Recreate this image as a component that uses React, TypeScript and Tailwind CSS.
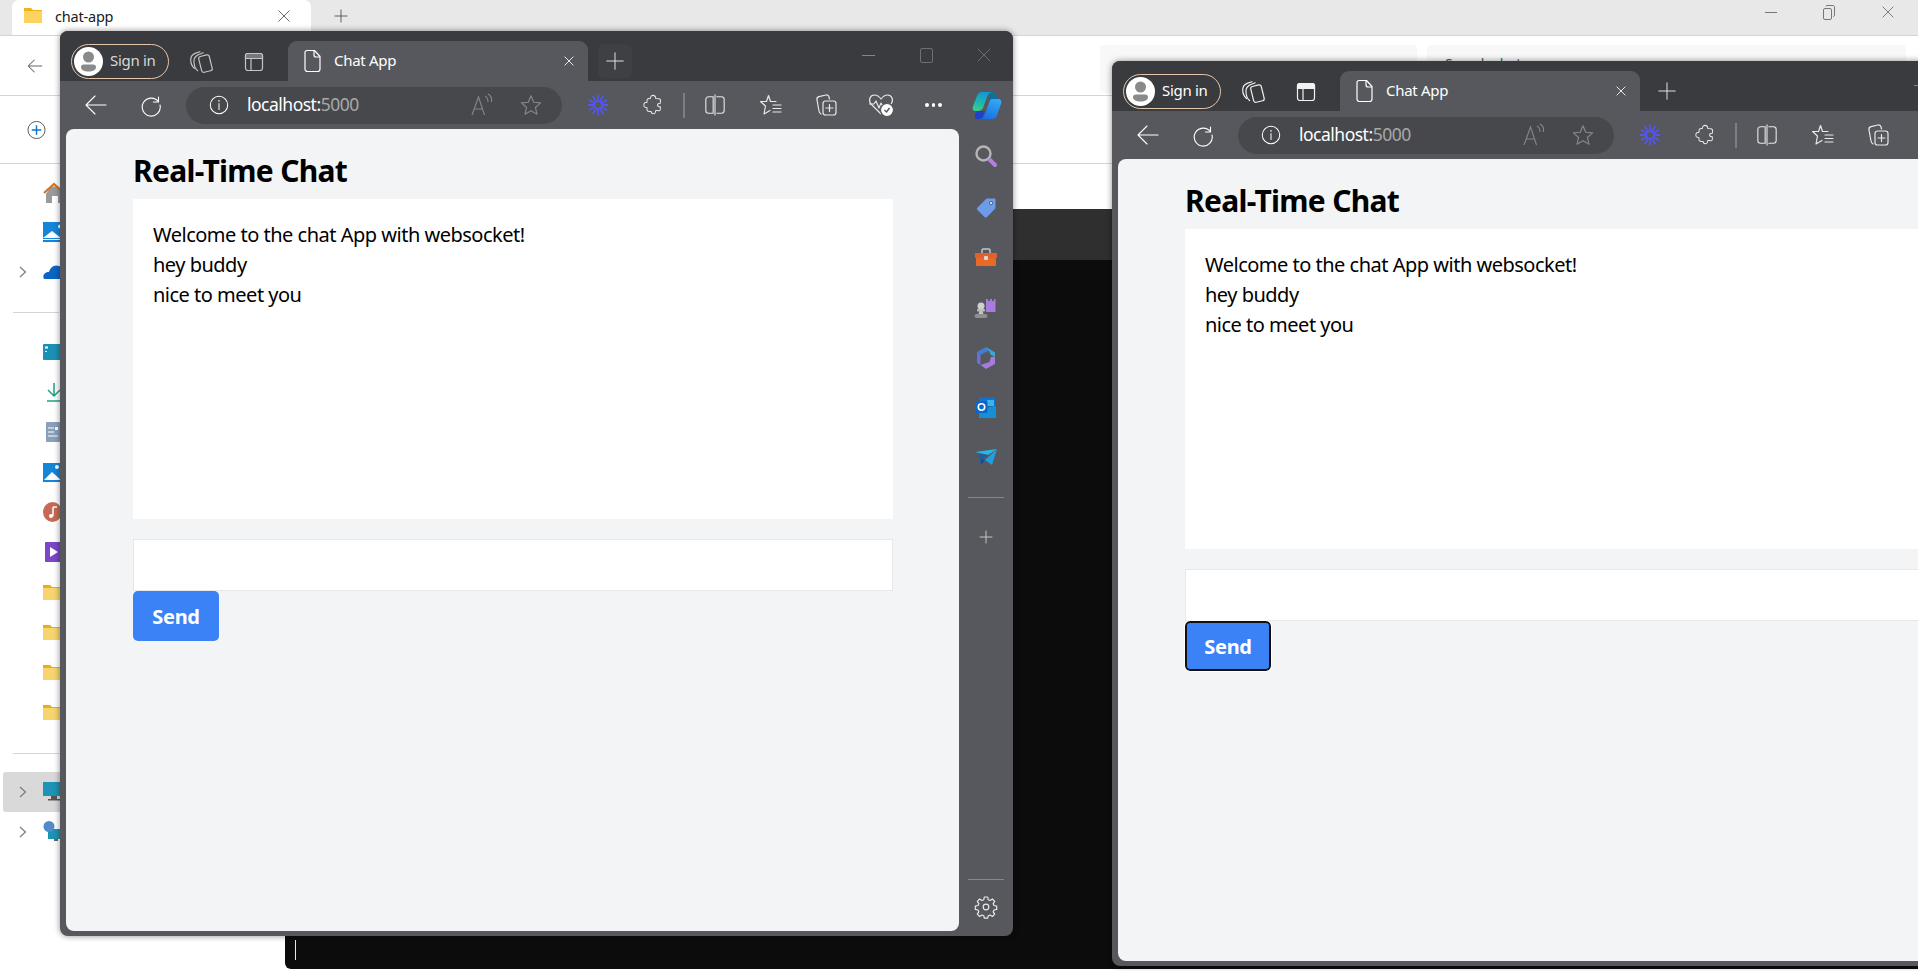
import React from "react";

const sans = "font-['Noto_Sans','Open_Sans',sans-serif]";

const S = ({ size = 24, children, className = "", vb = "0 0 24 24", sw = 1.5, color = "#fff" }: { size?: number; children: React.ReactNode; className?: string; vb?: string; sw?: number; color?: string }) => (
  <svg width={size} height={size} viewBox={vb} fill="none" stroke={color} strokeWidth={sw} strokeLinecap="round" strokeLinejoin="round" className={className}>
    {children}
  </svg>
);

const Spark = () => (
  <S size={22} color="#5356f0" sw={2}>
    <circle cx="12" cy="12" r="4.2" />
    {[0, 30, 60, 90, 120, 150, 180, 210, 240, 270, 300, 330].map((a) => (
      <line key={a} x1="12" y1="1.5" x2="12" y2="7" transform={`rotate(${a} 12 12)`} />
    ))}
  </S>
);

const Copilot = ({ id }: { id: string }) => (
  <svg width="30" height="29" viewBox="0 0 30 29">
    <defs>
      <linearGradient id={`${id}a`} x1="0.6" y1="0" x2="0.3" y2="1">
        <stop offset="0" stopColor="#1197d8" />
        <stop offset="0.55" stopColor="#1bb5b0" />
        <stop offset="1" stopColor="#37d08a" />
      </linearGradient>
      <linearGradient id={`${id}b`} x1="0.7" y1="0" x2="0.3" y2="1">
        <stop offset="0" stopColor="#35a8f2" />
        <stop offset="1" stopColor="#1670e6" />
      </linearGradient>
    </defs>
    <path d="M20 1c3 0 5 3 6 8h-9l1-8z" fill="#0d6f9e" />
    <path d="M10 1h11c-3 0-5 2-6 5l-4 11c-1 2-3 3-5 3H4c-3 0-4-2-3-5L5 5c1-3 3-4 5-4z" fill={`url(#${id}a)`} />
    <path d="M5 28c-1.500 0-2.500-1.500-2-3.500L4 20h9l-3 8z" fill="#2041c8" />
    <path d="M20 8h6c3 0 4 2 3 5l-4 11c-1 3-3 4-6 4H7c3 0 5-2 6-5l4-11c.5-2 1.500-4 3-4z" fill={`url(#${id}b)`} />
  </svg>
);

function Cell({ children, className = "" }: { children: React.ReactNode; className?: string }) {
  return <div className={`flex items-center justify-center shrink-0 ${className}`}>{children}</div>;
}

function SidebarIcons() {
  return (
    <div className="w-[54px] shrink-0 h-full flex flex-col items-center pt-[2px]">
      <Cell className="h-[50px] mb-[2px]">
        <svg width="24" height="24" viewBox="0 0 24 24" fill="none">
          <circle cx="9.500" cy="9.500" r="7" stroke="#b5b5b5" strokeWidth="2.400" />
          <path d="M16 16l5 5" stroke="#b37fe0" strokeWidth="4" strokeLinecap="round" />
        </svg>
      </Cell>
      <Cell className="h-[50px]">
        <svg width="22" height="22" viewBox="0 0 22 22">
          <path d="M12 1.500h7c1 0 1.500.5 1.500 1.500v7c0 1-.3 1.500-1 2.200l-7.500 7.800c-.8.8-1.700.8-2.500 0l-7-7c-.8-.8-.8-1.700 0-2.500L10 3c.7-.8 1.200-1.500 2-1.500z" fill="#6d9be8" />
          <circle cx="16" cy="6" r="1.600" fill="#e5eaf5" stroke="#33507f" strokeWidth="0.800" />
        </svg>
      </Cell>
      <Cell className="h-[50px]">
        <svg width="24" height="24" viewBox="0 0 24 24">
          <path d="M8 7V4.500C8 3.800 8.500 3 9.500 3h5c1 0 1.500.8 1.500 1.500V7" fill="none" stroke="#c8c8c8" strokeWidth="1.500" />
          <rect x="1" y="7" width="22" height="5" fill="#e3602a" />
          <rect x="2" y="12" width="20" height="8" rx="1" fill="#ea6a25" />
          <rect x="10" y="10" width="4" height="4" rx="1" fill="#d8d8d8" />
        </svg>
      </Cell>
      <Cell className="h-[50px]">
        <svg width="24" height="24" viewBox="0 0 24 24">
          <path d="M13.500 16V3h2v2h2V3h2v2h2V3h1.500v13z" fill="#a77be0" transform="translate(-1.500 0)" />
          <circle cx="7" cy="10" r="3.500" fill="#d0d0d0" />
          <rect x="3" y="13" width="8" height="2.500" rx="1" fill="#bdbdbd" />
          <path d="M5.500 15h3l1 3h-5z" fill="#c4c4c4" />
          <rect x="0.500" y="18" width="13" height="4" rx="2" fill="#8f8f8f" />
        </svg>
      </Cell>
      <Cell className="h-[50px]">
        <svg width="22" height="24" viewBox="0 0 22 24">
          <path d="M11 1 2 6v4l5-2 7-3.500z" fill="#3f7fd8" />
          <path d="M11 1l9 5.500V11l-4-2-2-4z" fill="#39a7d8" />
          <path d="M2 6v11l3.500 2V9z" fill="#6a6fdc" />
          <path d="M20 11v7l-9 5-5.500-4 9-3 1.500-5z" fill="#a67be0" />
          <path d="M7 8.500l7 3.500-7 4z" fill="#57585d" />
        </svg>
      </Cell>
      <Cell className="h-[50px]">
        <svg width="22" height="22" viewBox="0 0 22 22">
          <rect x="4" y="0.500" width="16" height="9" fill="#1173cc" />
          <path d="M21 9v12H4V12z" fill="#1590d8" />
          <rect x="12" y="3" width="7" height="6" fill="#38b4ec" />
          <rect x="0.500" y="4" width="12" height="12" rx="1" fill="#0a66c8" />
          <circle cx="6.500" cy="10" r="3.200" fill="none" stroke="#fff" strokeWidth="1.600" />
        </svg>
      </Cell>
      <Cell className="h-[50px]">
        <svg width="24" height="20" viewBox="0 0 24 20">
          <path d="M1 4l22-3-9 6z" fill="#27b7ec" />
          <path d="M23 1 18 17l-7-5z" fill="#1e9fe5" />
          <path d="M5 6l9 1-7 4-1 6z" fill="#1160b8" />
          <path d="M7 11v6l4-5z" fill="#0c4f9c" />
        </svg>
      </Cell>
      <div className="w-[36px] h-px bg-[#85868a] mt-[14px]" />
      <Cell className="h-[50px] mt-[14px]">
        <S size={18} color="#d0d0d0" sw={1.200}>
          <path d="M12 4v16M4 12h16" />
        </S>
      </Cell>
      <div className="flex-1" />
      <div className="w-[36px] h-px bg-[#85868a]" />
      <Cell className="h-[56px] pb-[2px]">
        <S size={24} color="#e8e8e8" sw={1.200}>
          <path d="M10.300 2.500h3.400l.5 2.700 1.900.8 2.300-1.500 2.300 2.400-1.500 2.300.8 1.800 2.700.6v3.300l-2.700.6-.8 1.800 1.500 2.300-2.300 2.400-2.300-1.500-1.900.8-.5 2.400h-3.400l-.5-2.400-1.900-.8-2.300 1.500-2.300-2.400 1.500-2.300-.8-1.800-2.700-.6v-3.300l2.700-.6.800-1.800-1.500-2.300 2.300-2.400 2.300 1.500 1.900-.8z" transform="translate(0 -0.500)" />
          <circle cx="12" cy="12" r="2.800" />
        </S>
      </Cell>
    </div>
  );
}

function Browser({ focused, id, className }: { focused?: boolean; id: string; className: string }) {
  const strip = focused ? "#f2f2f2" : "#c5c5c5";
  return (
    <div className={`absolute w-[953px] h-[905px] rounded-[8px] overflow-hidden flex flex-col bg-[#57585d] shadow-[0_0_6px_rgba(0,0,0,0.45)] ${sans} ${className}`}>
      <div className="h-[50px] shrink-0 bg-[#3a3b3f] flex items-end pl-[11px]">
        <div className="w-[98px] h-[35px] mb-[2px] rounded-full border border-[#e6c6ad] flex items-center pl-[2px] gap-[7px]">
          <div className="w-[29px] h-[29px] rounded-full bg-white flex items-center justify-center overflow-hidden shrink-0">
            <svg width="21" height="23" viewBox="0 0 21 23">
              <circle cx="10.500" cy="7" r="5.500" fill="#8a8a8a" />
              <path d="M6 14.500h9c2 0 3 1 3 2.500 0 3-3 4.500-7.500 4.500S3 20 3 17c0-1.500 1-2.500 3-2.500z" fill="#8a8a8a" />
            </svg>
          </div>
          <span className={`text-[15px] leading-none -mt-[2px] tracking-[-0.3px] whitespace-nowrap ${focused ? "text-white" : "text-[#d8d8d8]"}`}>Sign in</span>
        </div>
        <Cell className="w-[26px] h-[26px] ml-[19px] mb-[6px]">
          <S size={26} color={strip} sw={1.100}>
            <rect x="11" y="6" width="10" height="15" rx="2" transform="rotate(-14 16 13)" />
            <path d="M9 20c-2-1.500-3.500-5-3.500-9 0-2 1-4 3.500-5.500L14 3.500" />
            <path d="M6 18C3.500 16 2.500 13 2.500 10 2.500 7.500 4 5 6.500 4L11 2.500" />
          </S>
        </Cell>
        <Cell className="w-[22px] h-[22px] ml-[29px] mb-[8px]">
          <svg width="20" height="20" viewBox="0 0 20 20" fill="none" stroke={strip} strokeWidth="1.200">
            <rect x="1.500" y="1.500" width="17" height="17" rx="2.500" />
            <path d="M1.500 6.500h17v-3a2 2 0 0 0-2-2h-13a2 2 0 0 0-2 2z" fill={focused ? "#f2f2f2" : "#77787b"} />
            <path d="M7 6.500v12" />
          </svg>
        </Cell>
        <div className="w-[300px] h-[40px] ml-[23px] bg-[#57585d] rounded-t-[9px] flex items-center pl-[16px] pr-[12px]">
          <svg width="18" height="24" viewBox="0 0 18 24" fill="none" stroke="#fff" strokeWidth="1.200" strokeLinejoin="round">
            <path d="M3 1.500h7.500L16 7.500V20a2.500 2.500 0 0 1-2.500 2.500h-10A2.500 2.500 0 0 1 1 20V3.500a2 2 0 0 1 2-2z" />
            <path d="M10 1.500V6a2 2 0 0 0 2 2h4" />
          </svg>
          <span className="text-[15px] leading-none -mt-[2px] text-white ml-[12px] tracking-[-0.3px] whitespace-nowrap">Chat App</span>
          <div className="flex-1" />
          <S size={14} sw={1.500}>
            <path d="M5 5l14 14M19 5L5 19" />
          </S>
        </div>
        <Cell className={`w-[34px] h-[34px] ml-[10px] mb-[3px] rounded-[6px] ${focused ? "" : "bg-[#3f4044]"}`}>
          <S size={22} color="#e0e0e0" sw={1.100}>
            <path d="M12 3v18M3 12h18" />
          </S>
        </Cell>
        <div className="flex-1" />
        <div className="flex items-center self-start h-[48px]">
          <Cell className="w-[58px]">
            <div className="w-[13px] h-px bg-[#85868a]" />
          </Cell>
          <Cell className="w-[58px]">
            <div className="w-[13px] h-[15px] rounded-[2px] border border-[#6f7074]" />
          </Cell>
          <Cell className="w-[58px]">
            <S size={18} color="#85868a" sw={0.900}>
              <path d="M4 4l16 16M20 4L4 20" />
            </S>
          </Cell>
        </div>
      </div>
      <div className="h-[48px] shrink-0 bg-[#57585d] flex items-center">
        <Cell className="w-[24px] ml-[24px]">
          <S size={24} sw={1.100}>
            <path d="M22 12H2M11 3l-9 9 9 9" />
          </S>
        </Cell>
        <Cell className="w-[24px] ml-[31px]">
          <S size={24} sw={1.100}>
            <path d="M19.500 4v5h-5" />
            <path d="M19.300 8.500A9 9 0 1 0 21 12" />
          </S>
        </Cell>
        <div className="w-[376px] h-[37px] ml-[23px] rounded-full bg-[#47484c] flex items-center pl-[22px] pr-[20px]">
          <S size={22} sw={1.100}>
            <circle cx="12" cy="12" r="9.500" />
            <path d="M12 10.500V17" />
            <circle cx="12" cy="7.500" r="0.300" />
          </S>
          <span className="ml-[17px] text-[17.500px] leading-none tracking-[-0.5px] whitespace-nowrap">
            <span className="text-white">localhost:</span>
            <span className="text-[#a8a8a8]">5000</span>
          </span>
          <div className="flex-1" />
          <span className="-mr-[1px]">
            <svg width="24" height="24" viewBox="0 0 24 24" fill="none" stroke="#85868a" strokeWidth="1.100">
              <path d="M2 22 8.500 4l6 18M4.500 16h8" />
              <path d="M15 3c2 1 3 3 3 6M18 1c3 1.500 4 5 3.500 8" />
            </svg>
          </span>
          <span className="ml-[27px]">
            <svg width="22" height="22" viewBox="0 0 24 24" fill="none" stroke="#85868a" strokeWidth="1.300" strokeLinejoin="round">
              <path d="M12 2l3 7 7.500.7-5.700 5 1.700 7.300L12 18.200 5.500 22l1.700-7.300-5.700-5L9 9z" />
            </svg>
          </span>
        </div>
        <Cell className="w-[24px] ml-[24px]">
          <Spark />
        </Cell>
        <Cell className="w-[24px] ml-[31px]">
          <S size={22} color="#e8e8e8" sw={1.100}>
            <path d="M9 5c0-2 1.500-3.500 3-3.500S15 3 15 5c2 0 4.500 0 5 1 .5 1.500 0 3 0 4-1.500 0-3 .5-3 2s1.500 2 3 2c0 1.500.5 3-.5 4-1 .5-3 0-4.500 0 0 1.500-1 3.500-2.500 3.500S10 20 10 19c-1 0-3 .5-4-.5s-.5-2.500-.5-3.500C4 15 2 14 2 12s2-3 3.500-3C5.500 8 5 6.500 6 5.500S8 5 9 5z" />
          </S>
        </Cell>
        <div className="w-[1.500px] h-[25px] bg-[#7d7e82] ml-[18px]" />
        <Cell className="w-[24px] ml-[18px]">
          <S size={22} color="#e8e8e8" sw={1.200}>
            <path d="M10 3H5a3 3 0 0 0-3 3v12a3 3 0 0 0 3 3h5zM14 3h5a3 3 0 0 1 3 3v12a3 3 0 0 1-3 3h-5M12 1v22" />
          </S>
        </Cell>
        <Cell className="w-[24px] ml-[32px]">
          <S size={24} color="#e8e8e8" sw={1.200}>
            <path d="M17 8.500h-5.500L9.500 2.500 7.500 8.500H1.500l5 4.500L5 21l6-3.500" />
            <path d="M14 12h8M14 15.500h8M14 19h8" />
          </S>
        </Cell>
        <Cell className="w-[24px] ml-[31px]">
          <S size={24} color="#e8e8e8" sw={1.200}>
            <path d="M7 21c-1-.5-1.700-1.500-2-3L3 7c-.3-1.500.7-3 2-3.300L12 2c1.500-.3 2.700.5 3 2l.5 2" />
            <rect x="9" y="8" width="13" height="14" rx="2.500" />
            <path d="M15.500 11.500v7M12 15h7" />
          </S>
        </Cell>
        <Cell className="w-[28px] ml-[29px]">
          <svg width="28" height="26" viewBox="0 0 28 26" fill="none" stroke="#e8e8e8" strokeWidth="1.200" strokeLinejoin="round">
            <path d="M14 22 4 12C1 8 3 3 7.500 3 10.500 3 12.500 5 14 7c1.500-2 3.500-4 6.500-4C25 3 27 8 24 12" />
            <path d="M2 12h5l2-3 3 7 2-5 1 2h3" />
            <circle cx="20" cy="18" r="6.500" fill="#fff" stroke="#57585d" />
            <path d="M17.500 18l2 2 3-4" stroke="#57585d" strokeWidth="1.400" />
          </svg>
        </Cell>
        <Cell className="w-[24px] ml-[27px] gap-[3px]">
          <div className="w-[3.500px] h-[3.500px] rounded-full bg-white shrink-0" />
          <div className="w-[3.500px] h-[3.500px] rounded-full bg-white shrink-0" />
          <div className="w-[3.500px] h-[3.500px] rounded-full bg-white shrink-0" />
        </Cell>
        <Cell className="w-[32px] ml-[25px]">
          <Copilot id={id} />
        </Cell>
      </div>
      <div className="flex-1 min-h-0 flex pl-[6px]">
        <div className="flex-1 min-w-0 mb-[5px] bg-[#f3f4f6] rounded-[8px] text-black">
          <div className="w-[760px] ml-[67px] pt-[19px]">
            <h1 className="text-[30px] leading-[45px] font-bold tracking-[-0.7px] mb-[6px]">Real-Time Chat</h1>
            <div className="bg-white h-[320px] px-[20px] pt-[21px] text-[20px] leading-[30px] tracking-[-0.5px]">
              <div>Welcome to the chat App with websocket!</div>
              <div>hey buddy</div>
              <div>nice to meet you</div>
            </div>
            <div className="mt-[20px] h-[52px] bg-white border border-[#e5e7eb]" />
            <button
              className={`block w-[86px] h-[50px] pt-[2px] bg-[#3b82f6] rounded-[5px] text-white text-[20px] font-bold tracking-[-0.3px] ${focused ? "border-[2px] border-[#111] outline outline-1 outline-white" : ""}`}
            >
              Send
            </button>
          </div>
        </div>
        <SidebarIcons />
      </div>
    </div>
  );
}

const Folder = () => (
  <svg width="22" height="15" viewBox="0 0 22 15">
    <path d="M0 0h7l2 2h13v13H0z" fill="#e9ac1c" />
    <rect x="0" y="3" width="22" height="12" fill="#f6d56f" />
  </svg>
);

function NavRow({ icon, chev, sel }: { icon: React.ReactNode; chev?: boolean; sel?: boolean }) {
  return (
    <div className={`h-[40px] flex items-center rounded-[3px] ml-[3px] pl-[16px] w-[60px] ${sel ? "bg-[#d9d9d9]" : ""}`}>
      <div className="w-[8px] shrink-0 flex items-center">
        {chev && (
          <svg width="8" height="12" viewBox="0 0 8 12" fill="none" stroke="#7b7b7b" strokeWidth="1.200">
            <path d="M1 1l5.500 5L1 11" />
          </svg>
        )}
      </div>
      <div className="ml-[16px] w-[22px] shrink-0 flex items-center">{icon}</div>
    </div>
  );
}

function Explorer() {
  return (
    <div className={`w-[1918px] h-[971px] bg-white flex flex-col ${sans}`}>
      <div className="h-[36px] shrink-0 bg-[#e8e8e8] border-b border-[#d5d5d5] flex items-stretch text-[#1a1a1a]">
        <div className="ml-[12px] w-[299px] h-[35px] bg-white rounded-t-[7px] flex items-center pl-[11px] pr-[20px]">
          <svg width="20" height="17" viewBox="0 0 20 17" className="-mt-[4px]">
            <path d="M1 1h7l2 2h9v13H1z" fill="#eeb31f" />
            <rect x="1" y="4" width="18" height="12" fill="#fcd35f" />
          </svg>
          <span className="ml-[12px] text-[14.500px] leading-none -mt-[3px] tracking-[-0.2px]">chat-app</span>
          <div className="flex-1" />
          <S size={14} color="#333" sw={1.300} className="-mt-[3px]">
            <path d="M3 3l18 18M21 3L3 21" />
          </S>
        </div>
        <div className="ml-[22px] -mt-[3px] flex items-center">
          <S size={16} color="#555" sw={1.400}>
            <path d="M12 3v18M3 12h18" />
          </S>
        </div>
        <div className="flex-1" />
        <div className="flex items-center -mt-[11px] mr-[23px] gap-[46px]">
          <div className="w-[12px] h-px bg-[#777]" />
          <svg width="12" height="15" viewBox="0 0 12 15" fill="none" stroke="#777" strokeWidth="1">
            <rect x="0.500" y="3.500" width="8" height="11" rx="1.500" />
            <path d="M3 1.500c0-.6.4-1 1-1h6c.6 0 1.500.4 1.500 1.500v8c0 .8-.4 1.500-1.500 1.500" />
          </svg>
          <S size={14} color="#555" sw={1.200}>
            <path d="M3 3l18 18M21 3L3 21" />
          </S>
        </div>
      </div>
      <div className="h-[60px] shrink-0 bg-white border-b border-[#d5d5d5] flex items-center">
        <div className="ml-[26px]">
          <S size={18} color="#666" sw={1.400}>
            <path d="M21 12H3M11 4l-8 8 8 8" />
          </S>
        </div>
        <div className="flex-1" />
        <div className="w-[317px] h-[48px] self-start mt-[9px] bg-[#f8f8f8] rounded-[4px]" />
        <div className="w-[479px] h-[48px] self-start mt-[9px] ml-[10px] mr-[12px] bg-[#f8f8f8] rounded-[4px] pl-[18px] pt-[8px] text-[14px] text-[#555]">
          Search chat-app
        </div>
      </div>
      <div className="h-[68px] shrink-0 bg-white border-b border-[#d5d5d5] flex items-center pl-[27px]">
        <svg width="19" height="20" viewBox="0 0 20 20" fill="none">
          <circle cx="10" cy="10" r="9" stroke="#555" strokeWidth="1" />
          <path d="M10 5v10M5 10h10" stroke="#0a74d4" strokeWidth="1.500" />
        </svg>
      </div>
      <div className="pt-[8px]">
        <NavRow icon={
          <svg width="22" height="21" viewBox="0 0 22 21"><path d="M8 4.500l6 0 7 7.500v9H15v-7H9v7H3v-9z" fill="#9a9a9a" /><path d="M1 11L11 2l10 9" fill="none" stroke="#d9731a" strokeWidth="2.200" /></svg>
        } />
        <NavRow icon={
          <svg width="22" height="20" viewBox="0 0 22 20"><rect width="22" height="17" fill="#1386d8" /><path d="M0 16l9-7 9 7z" fill="#fff" /><circle cx="17" cy="4.500" r="2" fill="#fff" /><rect y="18" width="22" height="2" fill="#1386d8" /></svg>
        } />
        <NavRow chev icon={
          <svg width="22" height="14" viewBox="0 0 22 14"><path d="M1 14c-2-4 1-7 5-7 1-4 5-8 10-6 3 1 5 3 6 5v8z" fill="#0b66c3" /></svg>
        } />
        <div className="h-px w-[46px] ml-[13px] bg-[#d5d5d5] mt-[20px] mb-[19px]" />
        <NavRow icon={<svg width="22" height="16" viewBox="0 0 22 16"><rect width="22" height="16" rx="1" fill="#1d8fb7" /><rect x="2" y="2.500" width="3" height="2" fill="#fff" /><rect x="2" y="7" width="2" height="1" fill="#fff" /></svg>} />
        <NavRow icon={<svg className="ml-[3px]" width="16" height="20" viewBox="0 0 16 20" fill="none" stroke="#1fa184" strokeWidth="1.500"><path d="M8 1v13M2 8l6 6 6-6M1 19h14" /></svg>} />
        <NavRow icon={<svg className="ml-[3px]" width="18" height="20" viewBox="0 0 18 20"><rect width="14" height="20" rx="1" fill="#8aa0ba" /><path d="M2 6h6M2 10h6M2 14h10" stroke="#fff" /><rect x="9" y="5" width="3" height="3" fill="#fff" /></svg>} />
        <NavRow icon={<svg width="22" height="19" viewBox="0 0 22 19"><rect width="22" height="19" fill="#1386d8" /><path d="M1 17l8-8 9 8z" fill="#fff" /><circle cx="14" cy="4" r="2" fill="#fff" /></svg>} />
        <NavRow icon={<svg width="22" height="20" viewBox="0 0 22 20"><ellipse cx="9.500" cy="10" rx="9.500" ry="10" fill="#c66a55" /><path d="M10 5v9" stroke="#fff" strokeWidth="1.500" /><circle cx="8" cy="14" r="2" fill="#fff" /><path d="M10 5h4" stroke="#fff" strokeWidth="1.500" /></svg>} />
        <NavRow icon={<svg className="ml-[2px]" width="18" height="20" viewBox="0 0 18 20"><rect width="18" height="20" rx="1" fill="#7d45c8" /><path d="M5 5l8 5-8 5z" fill="#fff" /></svg>} />
        <NavRow icon={<Folder />} />
        <NavRow icon={<Folder />} />
        <NavRow icon={<Folder />} />
        <NavRow icon={<Folder />} />
        <div className="h-px w-[46px] ml-[13px] bg-[#d5d5d5] mt-[21px] mb-[18px]" />
        <NavRow sel chev icon={<svg width="22" height="20" viewBox="0 0 22 20"><rect width="22" height="14" fill="#1e93b5" /><rect x="8" y="14" width="6" height="3" fill="#555" /><rect x="5" y="17" width="12" height="1.500" fill="#555" /></svg>} />
        <NavRow chev icon={<svg width="22" height="22" viewBox="0 0 22 22"><rect x="5" y="8" width="17" height="10" fill="#1e93b5" /><circle cx="6" cy="5.500" r="5.500" fill="#4f8cc9" /><rect x="11" y="18" width="4" height="2" fill="#666" /></svg>} />
      </div>
    </div>
  );
}

export default function App() {
  return (
    <div className="relative w-[1918px] h-[971px] overflow-hidden bg-white">
      <Explorer />
      <div className="absolute left-[285px] top-[209px] w-[1640px] h-[760px] bg-[#0c0c0c] flex flex-col rounded-bl-[6px]">
        <div className="h-[51px] bg-[#2f2f2f] shrink-0" />
        <div className="flex-1 flex items-end pl-[10px] pb-[9px]">
          <div className="w-px h-[20px] bg-[#e8e8e8]" />
        </div>
      </div>
      <Browser id="a" className="left-[60px] top-[31px]" />
      <Browser id="b" focused className="left-[1112px] top-[61px]" />
    </div>
  );
}
